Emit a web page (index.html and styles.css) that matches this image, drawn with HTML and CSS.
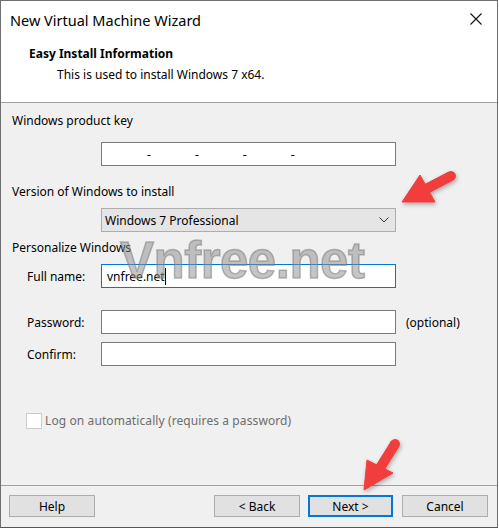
FILE: index.html
```html
<!DOCTYPE html>
<html>
<head>
<meta charset="utf-8">
<link rel="stylesheet" href="styles.css">
</head>
<body>
<div class="window">
  <div class="titlebar">
    <span class="title">New Virtual Machine Wizard</span>
    <svg class="close" width="12" height="12" viewBox="0 0 12 12"><path d="M0.5 0.5L11.5 11.5M11.5 0.5L0.5 11.5" stroke="#111" stroke-width="1.1" fill="none"/></svg>
  </div>
  <div class="header">
    <div class="h-title">Easy Install Information</div>
    <div class="h-sub">This is used to install Windows 7 x64.</div>
  </div>
  <div class="content">
    <div class="label l1">Windows product key</div>
    <div class="field key">
      <span>-</span><span>-</span><span>-</span><span>-</span>
    </div>
    <div class="label l2">Version of Windows to install</div>
    <div class="field select">
      <span>Windows 7 Professional</span>
      <svg class="chev" width="10" height="6" viewBox="0 0 10 6"><path d="M0.5 0.5L5 5L9.5 0.5" stroke="#333" stroke-width="1" fill="none"/></svg>
    </div>
    <div class="label l3">Personalize Windows</div>
    <div class="row r-name">
      <span class="rlabel">Full name:</span>
      <div class="field focus"><span class="val">vnfree.net</span><span class="caret"></span></div>
    </div>
    <div class="row r-pass">
      <span class="rlabel">Password:</span>
      <div class="field"></div>
      <span class="opt">(optional)</span>
    </div>
    <div class="row r-conf">
      <span class="rlabel">Confirm:</span>
      <div class="field"></div>
    </div>
    <div class="check">
      <span class="box"></span>
      <span class="clabel">Log on automatically (requires a password)</span>
    </div>
  </div>
  <div class="footer">
    <div class="btn help">Help</div>
    <div class="spacer"></div>
    <div class="btn back">&lt; Back</div>
    <div class="btn next">Next &gt;</div>
    <div class="btn cancel">Cancel</div>
  </div>
  <div class="watermark">Vnfree.net</div>
  <svg class="arrows" width="499" height="528" viewBox="0 0 499 528">
    <defs>
      <filter id="sh" x="-20%" y="-20%" width="140%" height="140%">
        <feDropShadow dx="1" dy="2" stdDeviation="2" flood-color="#000" flood-opacity="0.3"/>
      </filter>
    </defs>
    <g fill="#f23c3c" stroke="#f23c3c" filter="url(#sh)">
      <line x1="451" y1="176" x2="426" y2="189" stroke-width="10" stroke-linecap="round"/>
      <polygon points="402,202 420,175 435,202" stroke-width="1" stroke-linejoin="round"/>
      <line x1="395" y1="444" x2="380" y2="468" stroke-width="10" stroke-linecap="round"/>
      <polygon points="364,490 367,460 393,473" stroke-width="1" stroke-linejoin="round"/>
    </g>
  </svg>
</div>
</body>
</html>
```
FILE: styles.css
```css
* { box-sizing: border-box; }
html, body { margin: 0; padding: 0; }
body {
  width: 499px;
  height: 528px;
  overflow: hidden;
  font-family: "Noto Sans", "Open Sans", "Liberation Sans", sans-serif;
  font-size: 12px;
  color: #000;
  background: #fff;
}
.window {
  position: relative;
  width: 498px;
  height: 528px;
  border: 1px solid #6f6f6f;
  border-bottom-color: #555;
  display: flex;
  flex-direction: column;
  background: #fff;
}
.titlebar {
  height: 39px;
  display: flex;
  align-items: center;
  padding-left: 9px;
  padding-right: 15px;
  background: #fff;
}
.title {
  font-size: 14.5px;
  flex: 1;
  margin-top: -2px;
}
.close { margin-top: -3px; }
.header {
  height: 63px;
  padding-left: 28px;
  padding-top: 5px;
  border-bottom: 1px solid #a0a0a0;
  background: #fff;
}
.h-title {
  font-weight: bold;
  font-size: 12px;
  line-height: 18px;
}
.h-sub {
  padding-left: 28px;
  line-height: 18px;
  margin-top: 3px;
}
.content {
  height: 383px;
  background: #f0f0f0;
  padding-left: 11px;
  border-bottom: 1px solid #a0a0a0;
  display: flex;
  flex-direction: column;
  align-items: flex-start;
}
.label { line-height: 16px; }
.l1 { margin-top: 10px; }
.l2 { margin-top: 18px; }
.l3 { margin-top: 8px; }
.field {
  width: 295px;
  height: 24px;
  background: #fff;
  border: 1px solid #7a7a7a;
  display: flex;
  align-items: center;
}
.key {
  margin-top: 13px;
  margin-left: 89px;
  padding-left: 45px;
  gap: 44px;
}
.select {
  margin-top: 8px;
  margin-left: 89px;
  background: #e5e5e5;
  border-color: #adadad;
  padding-left: 3px;
  padding-right: 6px;
  justify-content: space-between;
}
.row {
  display: flex;
  align-items: center;
  width: 100%;
}
.rlabel {
  width: 89px;
  padding-left: 15px;
}
.r-name { margin-top: 8px; }
.r-pass { margin-top: 22px; }
.r-conf { margin-top: 8px; }
.focus {
  border-color: #0078d7;
  padding-left: 5px;
}
.caret {
  width: 1px;
  height: 17px;
  background: #000;
}
.opt { margin-left: 10px; }
.check {
  margin-top: 46px;
  margin-left: 14px;
  display: flex;
  align-items: center;
}
.box {
  width: 16px;
  height: 16px;
  border: 1px solid #cccccc;
  background: #fff;
}
.clabel {
  color: #6d6d6d;
  margin-left: 3px;
  letter-spacing: 0.1px;
}
.footer {
  flex: 1;
  display: flex;
  align-items: flex-start;
  padding-top: 9px;
  padding-left: 8px;
  padding-right: 9px;
  background: #f0f0f0;
}
.spacer { flex: 1; }
.btn {
  width: 86px;
  height: 22px;
  background: #e1e1e1;
  border: 1px solid #adadad;
  display: flex;
  align-items: center;
  justify-content: center;
}
.back { margin-right: 8px; }
.next {
  border: 2px solid #0078d7;
  width: 85px;
  margin-right: 9px;
}
.watermark {
  position: absolute;
  left: 119px;
  top: 230px;
  font-family: "Liberation Sans", Arial, sans-serif;
  font-weight: bold;
  font-size: 51px;
  color: rgba(140, 140, 140, 0.5);
  -webkit-text-stroke: 1.5px rgba(120, 120, 120, 0.5);
  pointer-events: none;
  letter-spacing: -0.5px;
}
.arrows {
  position: absolute;
  left: -1px;
  top: -1px;
  pointer-events: none;
}
```
